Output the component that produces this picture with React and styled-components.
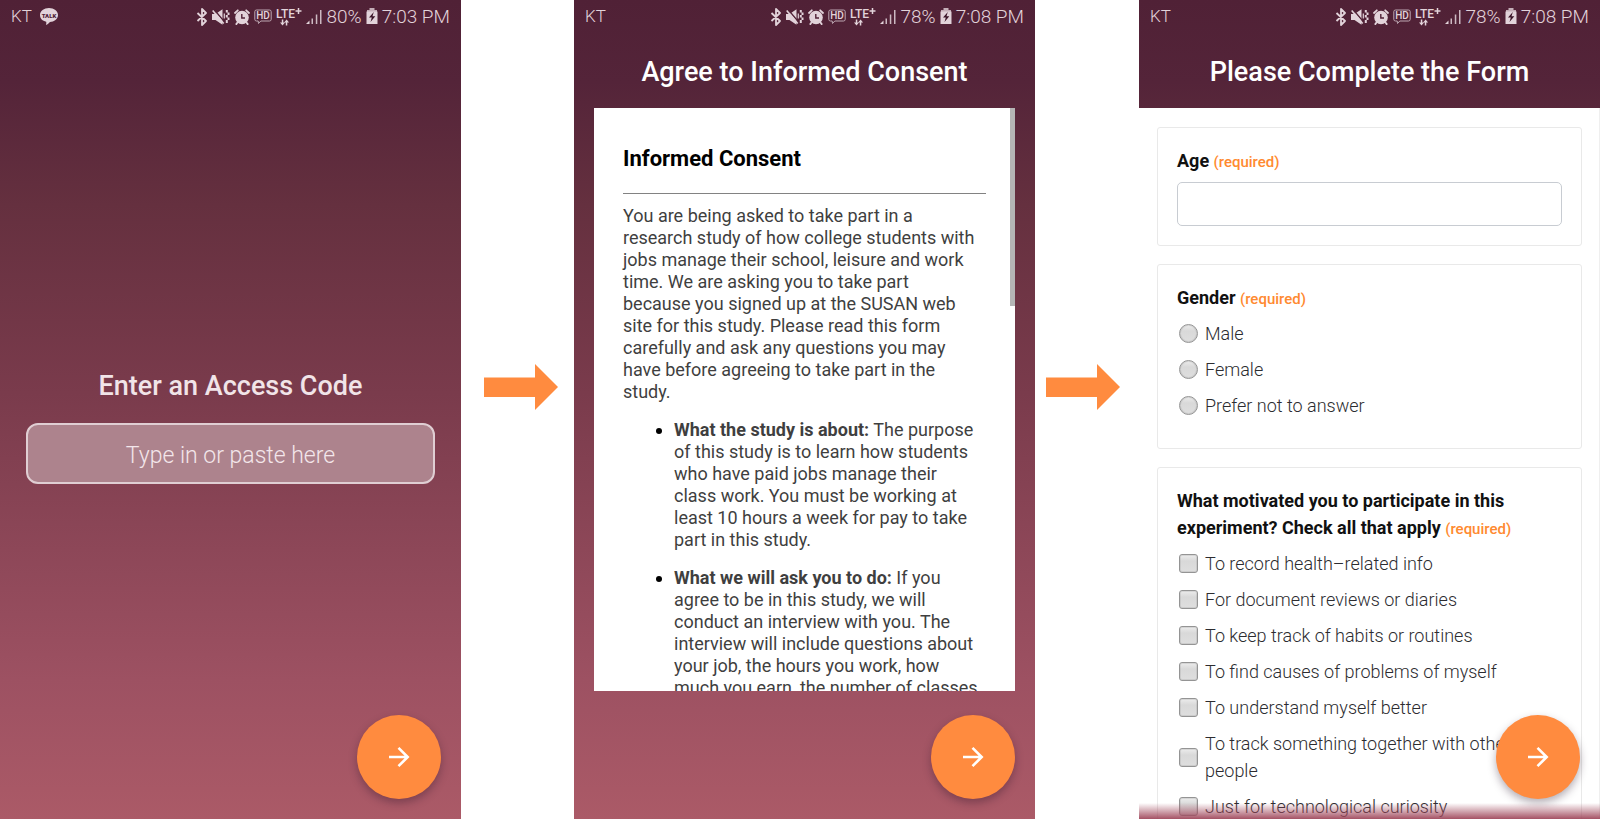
import React from "react";
import styled, { createGlobalStyle } from "styled-components";

const GlobalStyle = createGlobalStyle`
  *, *::before, *::after { box-sizing: border-box; }
  body {
    margin: 0;
    background: #fff;
    font-family: Roboto, "Liberation Sans", sans-serif;
  }
`;

const systemFont = `Roboto, "Noto Sans", sans-serif`;

const Board = styled.main`
  display: grid;
  grid-template-columns:
    minmax(0, 461fr) minmax(0, 113fr) minmax(0, 461fr)
    minmax(0, 104fr) minmax(0, 461fr);
  height: 100vh;
  min-height: 560px;
`;

const Screen = styled.section`
  position: relative;
  display: flex;
  flex-direction: column;
  min-height: 0;
  overflow: hidden;
  background: linear-gradient(#502136 0%, #542439 10%, #65303f 25%, #7a3b4c 48%, #9d5162 83%, #ab5a67 100%);
`;

const FlowGap = styled.div`
  display: flex;
  justify-content: center;
  padding: 364px ${(p) => p.$right}px 0 ${(p) => p.$left}px;
`;

const FlowArrow = styled.svg`
  display: block;
  width: 74px;
  height: 46px;
  fill: #ff8b3f;
`;

const StatusBar = styled.header`
  display: flex;
  flex: none;
  align-items: center;
  justify-content: space-between;
  height: 32px;
  padding: 1px 11px 0;
  color: #e2d3da;
  font: 300 19px/31px ${systemFont};
  white-space: nowrap;
`;

const StatusGroup = styled.div`
  display: flex;
  align-items: center;
  gap: ${(p) => p.$gap}px;
`;

const Carrier = styled.span`
  font-size: 17px;
`;

const Glyph = styled.svg`
  display: block;
  flex: none;
  fill: #e2d3da;
`;

const ScreenTitle = styled.h1`
  margin: 0;
  padding: ${(p) => (p.$bar ? "22px 0 18px" : "0")};
  flex: none;
  color: ${(p) => (p.$bar ? "#fff" : "#f1e4e8")};
  font: 500 27px/36px ${systemFont};
  text-align: center;
`;

const AccessForm = styled.form`
  display: flex;
  flex: 1;
  flex-direction: column;
  justify-content: center;
  gap: 19px;
  padding: 0 26px;
`;

const CodeInput = styled.input`
  width: 100%;
  height: 61px;
  padding: 4px 12px 0;
  border: 2px solid #e0ced3;
  border-radius: 12px;
  background: #ad838d;
  color: #f3e6ea;
  font: 300 23px/32px ${systemFont};
  text-align: center;
  outline: 0;
  &::placeholder {
    color: #f3e6ea;
    opacity: 1;
  }
`;

const NextButton = styled.button`
  position: absolute;
  right: 20px;
  bottom: 20px;
  display: flex;
  align-items: center;
  justify-content: center;
  width: 84px;
  height: 84px;
  padding: 0;
  border: 0;
  border-radius: 50%;
  background: #ff8b3f;
  box-shadow: 0 4px 9px rgba(40, 20, 40, 0.35);
  cursor: pointer;
`;

const ConsentSheet = styled.article`
  position: relative;
  flex: 1;
  min-height: 0;
  margin: 0 20px 128px;
  padding: 38px 29px 0;
  overflow: hidden;
  background: #fff;
  color: #3f3f3f;
  font-size: 18px;
  line-height: 22px;
`;

const ScrollThumb = styled.span`
  position: absolute;
  top: 0;
  right: 0;
  width: 5px;
  height: 34%;
  background: #b5b5b5;
`;

const SheetTitle = styled.h2`
  margin: 0 0 21px;
  color: #000;
  font-size: 22px;
  font-weight: 700;
  line-height: 26px;
`;

const Rule = styled.hr`
  height: 1px;
  margin: 0 0 11px;
  border: 0;
  background: #828282;
`;

const SheetText = styled.p`
  margin: 0 0 16px;
  padding-right: 8px;
`;

const SheetList = styled.ul`
  margin: 0;
  padding: 0 4px 0 51px;
`;

const SheetItem = styled.li`
  margin: 0 0 16px;
  &::marker {
    color: #000;
  }
`;

const FormBody = styled.form`
  display: flex;
  flex: 1;
  flex-direction: column;
  gap: 18px;
  min-height: 0;
  padding: 19px 17px 19px 18px;
  overflow: hidden;
  background: #fff;
  border-right: 1px solid #efefef;
`;

const Card = styled.div`
  flex: none;
  padding: 19px;
  border: 1px solid #e9e9e9;
  border-radius: 3px;
`;

const Question = styled.label`
  display: block;
  margin-bottom: 8px;
  color: #111;
  font-size: 18px;
  font-weight: 700;
  line-height: 27px;
`;

const Required = styled.span`
  color: #ff8a30;
  font-size: 15px;
  font-weight: 500;
  line-height: 18px;
`;

const AgeInput = styled.input`
  display: block;
  width: 100%;
  height: 44px;
  padding: 0 12px;
  border: 1px solid #c8ccd2;
  border-radius: 5px;
  background: #fff;
  font: 300 18px/27px Roboto, sans-serif;
`;

const OptionGroup = styled.fieldset`
  min-width: 0;
  margin: 0 0 5px;
  padding: 0;
  border: 0;
`;

const Legend = styled(Question).attrs({ as: "legend" })`
  margin-bottom: 5px;
  padding: 0;
`;

const Option = styled.label`
  display: flex;
  align-items: center;
  gap: 7px;
  padding: 4px 0 5px 2px;
  color: #2c2c30;
  font-size: 18px;
  font-weight: 300;
  line-height: 27px;
`;

const Choice = styled.input`
  appearance: none;
  flex: none;
  width: 19px;
  height: 19px;
  margin: 0;
  border: 1px solid #949494;
  border-radius: ${(p) => (p.type === "radio" ? "50%" : "3px")};
  background: linear-gradient(#ececec, #d9d9d9 35%, #dedede);
  box-shadow: inset 0 0 0 1px rgba(150, 150, 150, 0.25);
`;

const BottomFade = styled.div`
  position: absolute;
  right: 0;
  bottom: 0;
  left: 0;
  height: 16px;
  background: linear-gradient(rgba(160, 72, 92, 0), rgba(160, 72, 92, 0.95));
`;

function Bluetooth() {
  return (
    <Glyph width="12" height="18" viewBox="0 0 12 18">
      <path d="M1.500 5l8.500 8-4 4V1l4 4-8.500 8" style={{ fill: "none" }} stroke="#e2d3da" strokeWidth="1.800" strokeLinejoin="round" />
    </Glyph>
  );
}

function MuteVibrate() {
  return (
    <Glyph width="18" height="16" viewBox="0 0 18 16">
      <path d="M0 5h3.500l7-4.800v15.600l-7-4.800H0z" />
      <path d="M2 .5l11 13" stroke="#512237" strokeWidth="1.300" />
      <path d="M.7 1.500l11 13" stroke="#e2d3da" strokeWidth="1.600" />
      <path d="M14.800 1v2.500M16.500 3.500V6M14.800 6v2.500M16.500 8.500V11M14.800 11v3" stroke="#e2d3da" strokeWidth="2" />
      <path d="M12.300 4.500v5" stroke="#e2d3da" strokeWidth="1.200" />
    </Glyph>
  );
}

function Alarm() {
  return (
    <Glyph width="16" height="16" viewBox="0 0 16 16">
      <circle cx="8" cy="8.500" r="6.800" />
      <path d="M1 4l2.800-2.700M15 4l-2.800-2.700M3.500 13.500l-1.200 1.600M12.500 13.500l1.200 1.600" stroke="#e2d3da" strokeWidth="1.800" strokeLinecap="round" />
      <path d="M7.800 5v4h3.200" style={{ fill: "none" }} stroke="#512237" strokeWidth="1.400" />
    </Glyph>
  );
}

function HdVoice() {
  return (
    <Glyph width="18" height="16" viewBox="0 0 18 16">
      <path d="M2.500 1h13q1.700 0 1.700 1.700v7.600q0 1.700-1.700 1.700H6.800L4.500 14.500 4.200 12H2.500Q.8 12 .8 10.300V2.700Q.8 1 2.500 1z" style={{ fill: "none" }} stroke="#bda7b2" strokeWidth="1" />
      <text x="9" y="10" textAnchor="middle" fontFamily="Roboto, sans-serif" fontSize="10" fontWeight="500">HD</text>
    </Glyph>
  );
}

function LtePlus() {
  return (
    <Glyph width="26" height="20" viewBox="0 0 26 20">
      <text x="0" y="11" fontFamily="Roboto, sans-serif" fontSize="12" fontWeight="500">LTE</text>
      <path d="M19.500 4h6M22.500 1v6" stroke="#e2d3da" strokeWidth="1.500" />
      <path d="M5.800 12.500h1.500v3h1.700l-2.500 3-2.500-3h1.800zM11.300 18.500h-1.500v-3H8.100l2.500-3 2.500 3h-1.800z" />
    </Glyph>
  );
}

function Signal() {
  return (
    <Glyph width="17" height="16" viewBox="0 0 17 16">
      <path d="M0 15l3.500-3.500V15z" />
      <path d="M5.500 9.500H7V15H5.500zM9.800 5.500h1.500V15H9.800zM14 1h1.500v14H14z" opacity=".85" />
    </Glyph>
  );
}

function Battery() {
  return (
    <Glyph width="12" height="17" viewBox="0 0 12 17">
      <path d="M3.500 0h5v2H11v3H1V2h2.500z" opacity=".8" />
      <path d="M.5 3.500h11V16H.5z" />
      <path d="M7.800 4L3 9.500h2.800L4.500 14 9.300 8.300H6.500z" style={{ fill: "#3b1528" }} />
    </Glyph>
  );
}

function TalkBubble() {
  return (
    <Glyph width="18" height="17" viewBox="0 0 18 17">
      <path d="M9 0c5 0 9 3 9 7s-4 7-8 7c-1 1-2.500 2.500-4 3 .3-1 .4-2.500.2-3.300C2.500 13 0 10.500 0 7c0-4 4-7 9-7z" />
      <text x="9" y="9.500" textAnchor="middle" fontFamily="Roboto, sans-serif" fontSize="6" fontWeight="900" style={{ fill: "#512237" }}>TALK</text>
    </Glyph>
  );
}

function PhoneStatus({ battery, time, talk }) {
  return (
    <StatusBar>
      <StatusGroup $gap={8}>
        <Carrier>KT</Carrier>
        {talk && <TalkBubble />}
      </StatusGroup>
      <StatusGroup $gap={4}>
        <StatusGroup $gap={4}>
          <Bluetooth />
          <MuteVibrate />
          <Alarm />
          <HdVoice />
          <LtePlus />
          <Signal />
        </StatusGroup>
        <span>{battery}</span>
        <Battery />
        <span>{time}</span>
      </StatusGroup>
    </StatusBar>
  );
}

function Next() {
  return (
    <NextButton type="button" aria-label="Next">
      <svg width="22" height="22" viewBox="0 0 22 22" fill="none" stroke="#fff" strokeWidth="2.600">
        <path d="M1 11h18M10.500 1.800l9.200 9.200-9.200 9.200" />
      </svg>
    </NextButton>
  );
}

function Arrow({ left = 0, right = 0 }) {
  return (
    <FlowGap $left={left} $right={right}>
      <FlowArrow viewBox="0 0 74 46" aria-hidden="true">
        <path d="M0 13.500h51V0l23 23-23 23V33H0z" />
      </FlowArrow>
    </FlowGap>
  );
}

const genders = ["Male", "Female", "Prefer not to answer"];

const motives = [
  "To record health–related info",
  "For document reviews or diaries",
  "To keep track of habits or routines",
  "To find causes of problems of myself",
  "To understand myself better",
  "To track something together with other people",
  "Just for technological curiosity",
];

export default function App() {
  return (
    <>
      <GlobalStyle />
      <Board>
        <Screen>
          <PhoneStatus battery="80%" time="7:03 PM" talk />
          <AccessForm>
            <ScreenTitle as="label" htmlFor="access-code">Enter an Access Code</ScreenTitle>
            <CodeInput id="access-code" type="text" placeholder="Type in or paste here" />
          </AccessForm>
          <Next />
        </Screen>

        <Arrow left={6} />

        <Screen>
          <PhoneStatus battery="78%" time="7:08 PM" />
          <ScreenTitle $bar>Agree to Informed Consent</ScreenTitle>
          <ConsentSheet>
            <SheetTitle>Informed Consent</SheetTitle>
            <Rule />
            <SheetText>
              You are being asked to take part in a research study of how college
              students with jobs manage their school, leisure and work time. We are
              asking you to take part because you signed up at the SUSAN web site for
              this study. Please read this form carefully and ask any questions you
              may have before agreeing to take part in the study.
            </SheetText>
            <SheetList>
              <SheetItem>
                <strong>What the study is about:</strong> The purpose of this study is
                to learn how students who have paid jobs manage their class work. You
                must be working at least 10 hours a week for pay to take part in this
                study.
              </SheetItem>
              <SheetItem>
                <strong>What we will ask you to do:</strong> If you agree to be in this
                study, we will conduct an interview with you. The interview will
                include questions about your job, the hours you work, how much you
                earn, the number of classes
              </SheetItem>
            </SheetList>
            <ScrollThumb />
          </ConsentSheet>
          <Next />
        </Screen>

        <Arrow right={8} />

        <Screen>
          <PhoneStatus battery="78%" time="7:08 PM" />
          <ScreenTitle $bar>Please Complete the Form</ScreenTitle>
          <FormBody>
            <Card>
              <Question htmlFor="age">
                Age <Required>(required)</Required>
              </Question>
              <AgeInput id="age" type="text" inputMode="numeric" />
            </Card>
            <Card>
              <OptionGroup>
                <Legend>
                  Gender <Required>(required)</Required>
                </Legend>
                {genders.map((g) => (
                  <Option key={g}>
                    <Choice type="radio" name="gender" value={g} />
                    <span>{g}</span>
                  </Option>
                ))}
              </OptionGroup>
            </Card>
            <Card>
              <OptionGroup>
                <Legend>
                  What motivated you to participate in this experiment? Check all that
                  apply <Required>(required)</Required>
                </Legend>
                {motives.map((m) => (
                  <Option key={m}>
                    <Choice type="checkbox" name="motive" value={m} />
                    <span>{m}</span>
                  </Option>
                ))}
              </OptionGroup>
            </Card>
          </FormBody>
          <BottomFade />
          <Next />
        </Screen>
      </Board>
    </>
  );
}
